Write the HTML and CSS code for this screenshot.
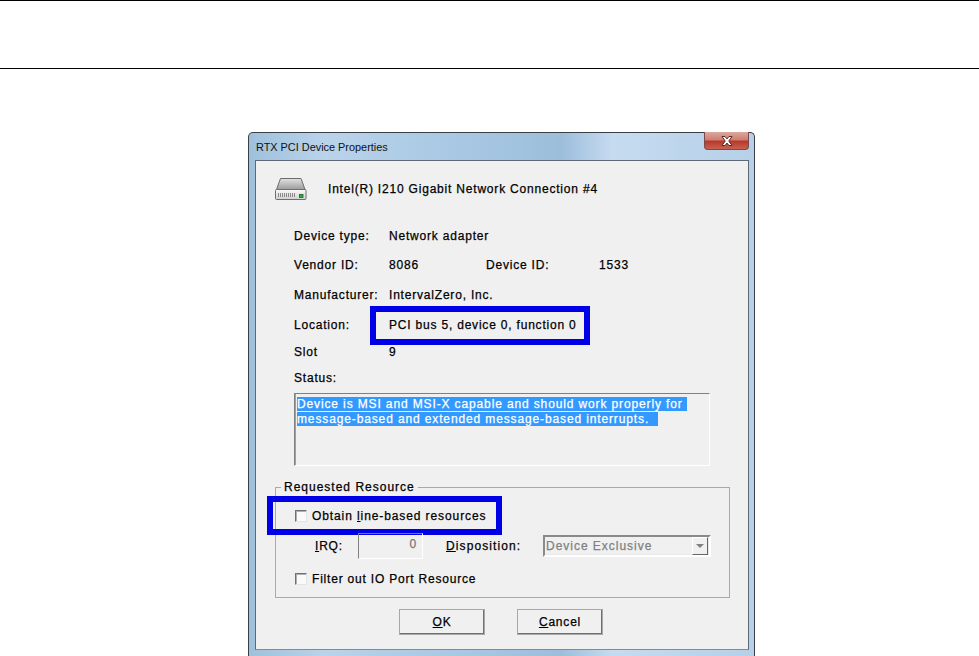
FILE: index.html
```html
<!DOCTYPE html>
<html lang="en">
<head>
<meta charset="utf-8">
<title>RTX PCI Device Properties</title>
<link rel="stylesheet" href="styles.css">
</head>
<body>
<header class="page-head"></header>
<main class="stage">
  <section class="window">
    <div class="titlebar">
      <span class="title">RTX PCI Device Properties</span>
      <button class="close" aria-label="Close">
        <svg width="16" height="12" viewBox="0 0 16 12"><path d="M3 1.500h3l2 2.400 2-2.400h3L9.800 6 13 10.500h-3L8 8.100 6 10.500H3L6.200 6z" fill="#fff" stroke="#5a2a26" stroke-width="1"/></svg>
      </button>
    </div>
    <div class="client">
      <div class="device-head">
        <svg class="drive" width="32" height="24" viewBox="0 0 32 24">
          <defs>
            <linearGradient id="top" x1="0" y1="0" x2="0" y2="1"><stop offset="0" stop-color="#e2e2e2"/><stop offset="1" stop-color="#9c9c9c"/></linearGradient>
            <linearGradient id="front" x1="0" y1="0" x2="0" y2="1"><stop offset="0" stop-color="#fafafa"/><stop offset="1" stop-color="#d0d0d0"/></linearGradient>
          </defs>
          <path d="M5.500 1.500h20.500l4 11H1.500z" fill="url(#top)" stroke="#6b6b6b"/>
          <rect x=".5" y="12.500" width="30.500" height="10" rx="1" fill="url(#front)" stroke="#6f6f6f"/>
          <path d="M3.500 16v4M5.500 16v4M7.500 16v4M9.500 16v4M11.500 16v4M13.500 16v4M15.500 16v4M17.500 16v4M19.500 16v4" stroke="#8a8a8a"/>
          <rect x="24.500" y="17.500" width="3.500" height="3" fill="#1fb52e" stroke="#2c5a33" stroke-width=".8"/>
        </svg>
        <span>Intel(R) I210 Gigabit Network Connection #4</span>
      </div>
      <div class="info">
        <div class="row row-type"><span class="key">Device type:</span><span>Network adapter</span></div>
        <div class="row row-vendor"><span class="key">Vendor ID:</span><span class="vendor-val">8086</span><span class="device-key">Device ID:</span><span>1533</span></div>
        <div class="row row-maker"><span class="key">Manufacturer:</span><span>IntervalZero, Inc.</span></div>
        <div class="row row-loc"><span class="key">Location:</span><span>PCI bus 5, device 0, function 0</span><span class="mark mark-loc"></span></div>
        <div class="row row-slot"><span class="key">Slot</span><span>9</span></div>
        <div class="row row-status"><span>Status:</span></div>
        <div class="status-box"><span class="selected">Device is MSI and MSI-X capable and should work properly for&nbsp;<br>message-based and extended message-based interrupts.&nbsp;&nbsp;</span></div>
      </div>
      <fieldset class="group">
        <legend>Requested Resource</legend>
        <div class="row check-row"><span class="check"></span><span>Obtain <u>l</u>ine-based resources</span><span class="mark mark-check"></span></div>
        <div class="row irq-row">
          <span class="irq-label"><u>I</u>RQ:</span>
          <span class="irq-input">0</span>
          <span class="disp-label"><u>D</u>isposition:</span>
          <span class="select"><span>Device Exclusive</span><span class="arrow"></span></span>
        </div>
        <div class="row filter-row"><span class="check"></span><span>Filter out IO Port Resource</span></div>
      </fieldset>
      <div class="buttons">
        <button class="btn"><u>O</u>K</button>
        <button class="btn"><u>C</u>ancel</button>
      </div>
    </div>
  </section>
</main>
</body>
</html>
```
FILE: styles.css
```css
* { box-sizing: border-box; }
html, body { margin: 0; height: 100%; overflow: hidden; background: #fff; }
body { font: 12px/20px "Liberation Sans", Arial, sans-serif; color: #000; }

.page-head { height: 69px; border-top: 1px solid #000; border-bottom: 1px solid #000; }
.stage { padding: 63px 0 0 248px; }

.window {
  width: 507px; height: 524px; padding: 0 5px 6px 6px;
  border: 1px solid #3a3f45; border-bottom: 0; border-radius: 5px 5px 0 0;
  background: linear-gradient(90deg, #9fc0dc 0, #b9d3ea 15%, #a6c6e2 45%, #9dbedb 62%, #c6dbf0 72%, #b5d0e8 100%);
  display: flex; flex-direction: column;
}
.titlebar { height: 27px; display: flex; justify-content: space-between; flex: none; }
.title { font-size: 10.900px; line-height: 27px; color: #111; margin: 1px 0 0 1px; }
.close {
  width: 45px; height: 18px; padding: 0; margin-top: -1px; margin-right: 0;
  border: 1px solid #7b4a48; border-top: 0; border-radius: 0 0 4px 4px;
  background: linear-gradient(#dba79d 0, #cf7f72 45%, #b8392a 55%, #c9604f 100%);
  display: flex; align-items: center; justify-content: center;
}
.client {
  flex: 1; background: #f0f0f0; border: 1px solid #5d6a76; border-bottom-color: #7f8c96;
  display: flex; flex-direction: column;
  letter-spacing: .8px; -webkit-text-stroke: .25px #000;
}
.device-head { display: flex; align-items: center; height: 24px; margin: 16px 0 0 19px; }
.device-head span { margin-left: 21px; }

.info { padding-left: 38px; }
.row { display: flex; height: 20px; align-items: center; position: relative; }
.key { width: 95px; flex: none; }
.row-type { margin-top: 25px; }
.row-vendor { margin-top: 9px; }
.vendor-val { width: 97px; }
.device-key { width: 113px; }
.row-maker { margin-top: 10px; }
.row-loc { margin-top: 10px; }
.row-slot { margin-top: 7px; }
.row-status { margin-top: 6px; }

.mark { position: absolute; border: 6px solid #0000e6; pointer-events: none; }
.mark-loc { left: 76px; top: -9px; width: 220px; height: 39px; }
.mark-check { left: -28px; top: -10px; width: 235px; height: 39px; }

.status-box {
  margin-top: 5px; width: 416px; height: 73px; padding: 3px 2px;
  border: 1px solid; border-color: #808080 #fff #fff #808080;
  box-shadow: inset 1px 0 0 #a0a0a0;
  line-height: 15px; letter-spacing: .87px;
}
.selected { background: #3399ff; color: #fff; -webkit-text-stroke: .25px #fff; }

.group {
  margin: 14px 0 0 19px; padding: 0 0 0 19px; width: 455px; height: 118px;
  border: 1px solid #a9a9a9; min-width: 0; position: relative;
}
.group legend { padding: 0 3px; margin-left: -14px; line-height: 14px; letter-spacing: 1px; }
.check-row { margin-top: 12px; letter-spacing: .9px; }
.check {
  width: 12px; height: 12px; margin-right: 5px; flex: none; background: #fafafa;
  border: 1px solid; border-color: #707070 #e4e4e4 #e4e4e4 #707070;
  box-shadow: inset 1px 1px 0 #b0b0b0;
}
.irq-row { margin-top: 7px; height: 26px; }
.irq-label { width: 43px; margin-left: 20px; }
.irq-input {
  width: 65px; height: 26px; padding: 0 5px; text-align: right; line-height: 20px;
  border: 1px solid; border-color: #808080 #fff #fff #808080;
  color: #777; -webkit-text-stroke: .25px #777;
}
.disp-label { width: 97px; margin-left: 23px; letter-spacing: 1.1px; }
.select {
  width: 168px; height: 22px; padding: 0 1px 0 1px; display: flex; align-items: center; justify-content: space-between;
  border: 2px solid; border-color: #8a8a8a #fff #fff #8a8a8a;
  box-shadow: inset -1px -1px 0 #e8e8e8;
  color: #808080; -webkit-text-stroke: .25px #808080; letter-spacing: .98px;
}
.arrow {
  width: 16px; height: 18px; background: #f0f0f0; position: relative; flex: none;
  border: 1px solid; border-color: #fff #666 #666 #fff;
}
.arrow::after {
  content: ""; position: absolute; left: 3px; top: 6px;
  border: 4px solid transparent; border-top: 4px solid #808080; border-bottom: 0;
}
.filter-row { margin-top: 10px; }

.buttons { display: flex; gap: 32px; margin: 11px 0 0 143px; }
.btn {
  width: 86px; height: 26px; padding: 0;
  font: inherit; letter-spacing: inherit; color: #000; background: #f0f0f0;
  border: 1px solid; border-color: #f8f8f8 #404040 #404040 #f8f8f8;
  outline: 1px solid #a8a8a8; outline-offset: -1px;
  box-shadow: inset -1px -1px 0 #707070;
}
```
